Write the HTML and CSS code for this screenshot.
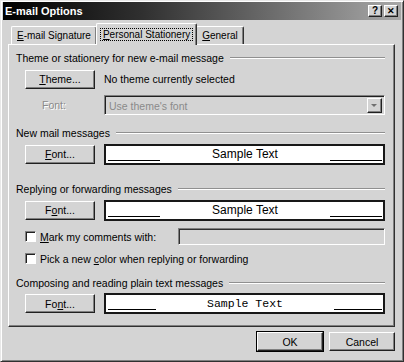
FILE: index.html
```html
<!DOCTYPE html>
<html lang="en">
<head>
<meta charset="utf-8">
<title>E-mail Options</title>
<link rel="stylesheet" href="styles.css">
</head>
<body>
<div class="window">
  <div class="titlebar">
    <span class="title">E-mail Options</span>
    <div class="caption-btns">
      <span class="cbtn">?</span>
      <span class="cbtn close">&#x2715;</span>
    </div>
  </div>

  <div class="tabs">
    <div class="tab"><u>E</u>-mail Signature</div>
    <div class="tab active"><span class="focus"><u>P</u>ersonal Stationery</span></div>
    <div class="tab"><u>G</u>eneral</div>
  </div>

  <div class="panel">
    <div class="group-title g1"><span>Theme or stationery for new e-mail message</span></div>
    <div class="row r-theme">
      <button class="btn"><u>T</u>heme...</button>
      <span class="note">No theme currently selected</span>
    </div>
    <div class="row r-font">
      <span class="label disabled">Font:</span>
      <div class="combo">
        <span>Use theme's font</span>
        <span class="arrow"></span>
      </div>
    </div>

    <div class="group-title g2"><span>New mail messages</span></div>
    <div class="row r-sample">
      <button class="btn"><u>F</u>ont...</button>
      <div class="sample">
        <span class="rule"></span>
        <span class="sample-text">Sample Text</span>
        <span class="rule"></span>
      </div>
    </div>

    <div class="group-title g3"><span>Replying or forwarding messages</span></div>
    <div class="row r-sample">
      <button class="btn">F<u>o</u>nt...</button>
      <div class="sample">
        <span class="rule"></span>
        <span class="sample-text">Sample Text</span>
        <span class="rule"></span>
      </div>
    </div>
    <div class="row r-check1">
      <label class="check"><span class="box"></span><span><u>M</u>ark my comments with:</span></label>
      <div class="field"></div>
    </div>
    <div class="row r-check2">
      <label class="check wide"><span class="box"></span><span>Pick a new <u>c</u>olor when replying or forwarding</span></label>
    </div>

    <div class="group-title g4"><span>Composing and reading plain text messages</span></div>
    <div class="row r-sample r-last">
      <button class="btn">Fo<u>n</u>t...</button>
      <div class="sample mono">
        <span class="rule"></span>
        <span class="sample-text">Sample Text</span>
        <span class="rule"></span>
      </div>
    </div>
  </div>

  <div class="footer">
    <button class="btn default">OK</button>
    <button class="btn">Cancel</button>
  </div>
</div>
</body>
</html>
```

FILE: styles.css
```css
body {
  margin: 0;
  background-color: #d4d4d4;
  font-family: "Liberation Sans", Arial, sans-serif;
  font-size: 10.5px;
  color: #000;
}
.window {
  width: 404px;
  height: 362px;
  box-sizing: border-box;
  border: 1px solid;
  border-color: #e8e8e8 #303030 #303030 #e8e8e8;
  box-shadow: inset 1px 1px #fff, inset -1px -1px #808080;
  padding: 1px 2px 2px 2px;
  background-color: #d4d4d4;
}
.titlebar {
  height: 18px;
  display: flex;
  align-items: center;
  justify-content: space-between;
  padding: 0 3px 0 2px;
  background: linear-gradient(to right, #000 0%, #303030 35%, #a8a8a8 100%);
}
.title {
  color: #fff;
  font-weight: bold;
  font-size: 11px;
}
.caption-btns {
  display: flex;
  gap: 1px;
}
.cbtn {
  width: 14px;
  height: 12px;
  box-sizing: border-box;
  background-color: #d4d4d4;
  border: 1px solid;
  border-color: #fff #202020 #202020 #fff;
  box-shadow: inset -1px -1px #808080;
  font-size: 10px;
  font-weight: bold;
  line-height: 10px;
  text-align: center;
}
.cbtn.close {
  margin-left: 1px;
  font-size: 9px;
}

/* tabs */
.tabs {
  display: flex;
  align-items: flex-end;
  height: 24px;
  padding-left: 8px;
  font-size: 10px;
}
.tab {
  height: 17px;
  line-height: 17px;
  padding: 0 5px;
  border: 1px solid;
  border-bottom: none;
  border-color: #fff #303030 #fff #fff;
  box-shadow: inset -1px 0 #808080;
  border-radius: 2px 2px 0 0;
}
.tab.active {
  height: 21px;
  line-height: 21px;
  padding: 0 3px;
  margin: 0 -1px -1px -1px;
  background-color: #d4d4d4;
  position: relative;
  z-index: 1;
}
.focus {
  border: 1px dotted #000;
  padding: 0 2px;
}

/* panel */
.panel {
  margin: 0 6px 0 5px;
  height: 283px;
  box-sizing: border-box;
  border: 1px solid;
  border-color: #fff #303030 #303030 #fff;
  box-shadow: inset -1px -1px #808080;
  padding: 0 9px 0 7px;
}
.group-title {
  display: flex;
  align-items: center;
  height: 14px;
  line-height: 14px;
}
.group-title::after {
  content: "";
  flex: 1;
  margin-left: 6px;
  border-top: 1px solid #909090;
  border-bottom: 1px solid #fff;
}
.g1 { margin-top: 6px; }
.g2 { margin-top: 11px; }
.g3 { margin-top: 18px; }
.g4 { margin-top: 9px; }

.row {
  display: flex;
  align-items: center;
  padding-left: 9px;
}
.r-theme { margin-top: 4px; height: 20px; }
.r-font { margin-top: 6px; height: 20px; }
.r-sample { margin-top: 4px; height: 20px; }
.r-check1 { margin-top: 8px; height: 17px; }
.r-check2 { margin-top: 5px; height: 17px; }
.r-last { margin-top: 3px; height: 21px; }

.btn {
  width: 70px;
  height: 19px;
  box-sizing: border-box;
  margin: 0;
  padding: 0;
  font-family: inherit;
  font-size: 10.5px;
  color: #000;
  background-color: #d4d4d4;
  border: 1px solid;
  border-color: #fff #202020 #202020 #fff;
  box-shadow: inset -1px -1px #808080;
}
.note {
  margin-left: 9px;
}
.label {
  width: 79px;
  padding-left: 17px;
  box-sizing: border-box;
}
.disabled {
  color: #8a8a8a;
  text-shadow: 1px 1px #fff;
}
.combo {
  flex: 1;
  height: 20px;
  box-sizing: border-box;
  display: flex;
  align-items: center;
  justify-content: space-between;
  border: 1px solid;
  border-color: #808080 #fff #fff #808080;
  box-shadow: inset 1px 1px #202020;
  padding: 1px 2px 0 4px;
  color: #8a8a8a;
}
.arrow {
  width: 15px;
  height: 15px;
  box-sizing: border-box;
  border: 1px solid;
  border-color: #fff #202020 #202020 #fff;
  box-shadow: inset -1px -1px #808080;
  position: relative;
}
.arrow::after {
  content: "";
  position: absolute;
  left: 3px;
  top: 5px;
  border-left: 3px solid transparent;
  border-right: 3px solid transparent;
  border-top: 3px solid #707070;
}

.sample {
  flex: 1;
  margin-left: 9px;
  height: 21px;
  box-sizing: border-box;
  background-color: #fff;
  border: 2px solid #181818;
  display: flex;
  align-items: center;
  justify-content: space-between;
  padding: 0 1px 0 2px;
}
.rule {
  width: 52px;
  align-self: flex-end;
  margin-bottom: 2px;
  border-top: 1px solid #000;
}
.sample-text {
  font-size: 12px;
}
.mono .sample-text {
  font-family: "Liberation Mono", "Courier New", monospace;
  font-size: 11.5px;
}
.mono .rule {
  width: 48px;
}

.check {
  display: flex;
  align-items: center;
  width: 153px;
  white-space: nowrap;
}
.check.wide {
  width: auto;
}
.box {
  width: 11px;
  height: 11px;
  box-sizing: border-box;
  background-color: #fff;
  border: 1px solid;
  border-color: #808080 #fff #fff #808080;
  box-shadow: inset 1px 1px #202020;
  margin-right: 4px;
}
.field {
  flex: 1;
  height: 17px;
  box-sizing: border-box;
  border: 1px solid;
  border-color: #808080 #fff #fff #808080;
  box-shadow: inset 1px 1px #303030;
}

/* footer */
.footer {
  display: flex;
  justify-content: flex-end;
  gap: 6px;
  padding: 5px 6px 0 0;
}
.footer .btn {
  width: 66px;
  height: 19px;
}
.btn.default {
  outline: 1px solid #000;
  outline-offset: 0;
}
```
